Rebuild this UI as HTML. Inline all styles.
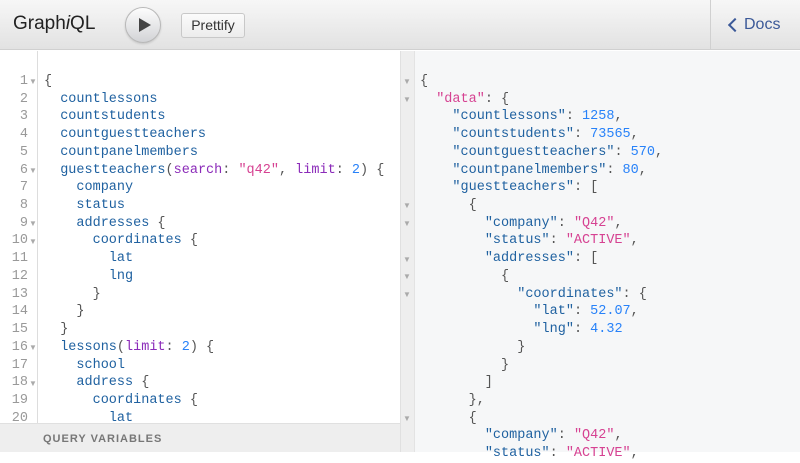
<!DOCTYPE html>
<html><head><style>
*{margin:0;padding:0;box-sizing:border-box}
body{width:800px;height:452px;overflow:hidden;background:#fff;font-family:"Liberation Sans",sans-serif;position:relative}
.top{position:absolute;left:0;top:0;width:800px;height:50px;background:linear-gradient(#f7f7f7,#e2e2e2);border-bottom:1px solid #d0d0d0}
.title{position:absolute;left:13px;top:13px;font-size:19px;color:#222}
.play{position:absolute;left:125px;top:7px;width:36px;height:36px;border-radius:50%;background:linear-gradient(#fdfdfd,#d2d3d6);border:1px solid #b8b8b8;box-shadow:0 1px 2px rgba(0,0,0,.15)}
.play:after{content:"";position:absolute;left:13px;top:10px;border-left:12px solid #444;border-top:7px solid transparent;border-bottom:7px solid transparent}
.pret{position:absolute;left:181px;top:13px;width:64px;height:25px;border:1px solid #c8c8c8;border-radius:3px;background:linear-gradient(#fbfbfb,#ececec);font-size:14px;color:#333;text-align:center;line-height:23px}
.docs{position:absolute;left:710px;top:0;width:90px;height:50px;border-left:1px solid #d0d0d0;color:#3b5998;font-size:16px;line-height:50px;padding-left:33px}
.docs:before{content:"";position:absolute;left:19px;top:20px;width:8px;height:8px;border-left:2px solid #3b5998;border-bottom:2px solid #3b5998;transform:rotate(45deg)}
.left{position:absolute;left:0;top:51px;width:400px;height:372px;overflow:hidden}
.gut{position:absolute;left:0;top:0;width:38px;height:372px;background:#fff;border-right:1px solid #ddd}
.code{position:absolute;top:22px;font-family:"Liberation Mono",monospace;font-size:13.5px;line-height:17.72px;white-space:pre;color:#555}
.ln{left:0;width:28px;text-align:right;color:#999}
.fold{position:absolute;color:#aaa;font-size:8px}
.p{color:#1f61a0}.a{color:#8b2bb9}.n{color:#2882f9}.s{color:#d64292}
.right{position:absolute;left:400px;top:51px;width:400px;height:401px;background:#f6f7f8;border-left:1px solid #e0e0e0}
.rg{position:absolute;left:0;top:0;width:14px;height:401px;background:#eeeeee;border-right:1px solid #e3e3e3}
.qv{position:absolute;left:0;top:423px;width:400px;height:29px;background:#eeeeee;border-top:1px solid #e0e0e0;font-size:11px;font-weight:bold;letter-spacing:1px;color:#777;padding:9px 0 0 43px}
</style></head><body>
<div class="top">
<div class="title">Graph<i>i</i>QL</div>
<div class="play"></div>
<div class="pret">Prettify</div>
<div class="docs">Docs</div>
</div>
<div class="left">
<div class="gut"></div>
<div class="code ln">1
2
3
4
5
6
7
8
9
10
11
12
13
14
15
16
17
18
19
20</div>
<div class="fold" style="left:29px;top:26px">▼</div>
<div class="fold" style="left:29px;top:115px">▼</div>
<div class="fold" style="left:29px;top:168px">▼</div>
<div class="fold" style="left:29px;top:186px">▼</div>
<div class="fold" style="left:29px;top:292px">▼</div>
<div class="fold" style="left:29px;top:328px">▼</div>
<div class="code" style="left:44px">{
  <span class="p">countlessons</span>
  <span class="p">countstudents</span>
  <span class="p">countguestteachers</span>
  <span class="p">countpanelmembers</span>
  <span class="p">guestteachers</span>(<span class="a">search</span>: <span class="s">"q42"</span>, <span class="a">limit</span>: <span class="n">2</span>) {
    <span class="p">company</span>
    <span class="p">status</span>
    <span class="p">addresses</span> {
      <span class="p">coordinates</span> {
        <span class="p">lat</span>
        <span class="p">lng</span>
      }
    }
  }
  <span class="p">lessons</span>(<span class="a">limit</span>: <span class="n">2</span>) {
    <span class="p">school</span>
    <span class="p">address</span> {
      <span class="p">coordinates</span> {
        <span class="p">lat</span></div>
</div>
<div class="qv">QUERY VARIABLES</div>
<div class="right">
<div class="rg"></div>
<div class="fold" style="left:2px;top:26px">▼</div>
<div class="fold" style="left:2px;top:44px">▼</div>
<div class="fold" style="left:2px;top:150px">▼</div>
<div class="fold" style="left:2px;top:168px">▼</div>
<div class="fold" style="left:2px;top:204px">▼</div>
<div class="fold" style="left:2px;top:221px">▼</div>
<div class="fold" style="left:2px;top:239px">▼</div>
<div class="fold" style="left:2px;top:363px">▼</div>
<div class="code" style="left:19px">{
  <span class="s">"data"</span>: {
    <span class="p">"countlessons"</span>: <span class="n">1258</span>,
    <span class="p">"countstudents"</span>: <span class="n">73565</span>,
    <span class="p">"countguestteachers"</span>: <span class="n">570</span>,
    <span class="p">"countpanelmembers"</span>: <span class="n">80</span>,
    <span class="p">"guestteachers"</span>: [
      {
        <span class="p">"company"</span>: <span class="s">"Q42"</span>,
        <span class="p">"status"</span>: <span class="s">"ACTIVE"</span>,
        <span class="p">"addresses"</span>: [
          {
            <span class="p">"coordinates"</span>: {
              <span class="p">"lat"</span>: <span class="n">52.07</span>,
              <span class="p">"lng"</span>: <span class="n">4.32</span>
            }
          }
        ]
      },
      {
        <span class="p">"company"</span>: <span class="s">"Q42"</span>,
        <span class="p">"status"</span>: <span class="s">"ACTIVE"</span>,</div>
</div>
</body></html>
